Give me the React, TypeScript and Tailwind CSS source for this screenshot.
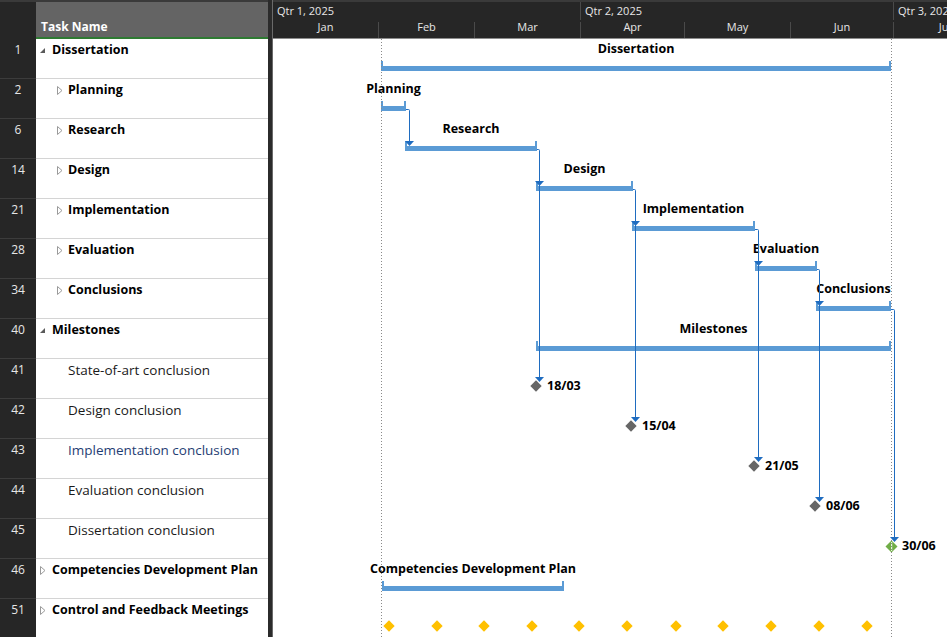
import React from 'react';

type Row = {
  id: number;
  name: string;
  level: 0 | 1;
  icon?: 'open' | 'closed';
  bold?: boolean;
  color?: string;
  bar?: { from: number; to: number; label: string };
  milestone?: { x: number; label: string; done?: boolean };
  meetings?: boolean;
};

// chart x positions are page pixels, chart starts at CHART_X
const CHART_X = 273;
const HEAD_H = 39;

const ROWS: Row[] = [
  { id: 1, name: 'Dissertation', level: 0, icon: 'open', bold: true, bar: { from: 381, to: 891, label: 'Dissertation' } },
  { id: 2, name: 'Planning', level: 1, icon: 'closed', bold: true, bar: { from: 381, to: 406, label: 'Planning' } },
  { id: 6, name: 'Research', level: 1, icon: 'closed', bold: true, bar: { from: 405, to: 537, label: 'Research' } },
  { id: 14, name: 'Design', level: 1, icon: 'closed', bold: true, bar: { from: 536, to: 633, label: 'Design' } },
  { id: 21, name: 'Implementation', level: 1, icon: 'closed', bold: true, bar: { from: 632, to: 755, label: 'Implementation' } },
  { id: 28, name: 'Evaluation', level: 1, icon: 'closed', bold: true, bar: { from: 755, to: 817, label: 'Evaluation' } },
  { id: 34, name: 'Conclusions', level: 1, icon: 'closed', bold: true, bar: { from: 816, to: 891, label: 'Conclusions' } },
  { id: 40, name: 'Milestones', level: 0, icon: 'open', bold: true, bar: { from: 536, to: 891, label: 'Milestones' } },
  { id: 41, name: 'State-of-art conclusion', level: 1, milestone: { x: 536, label: '18/03' } },
  { id: 42, name: 'Design conclusion', level: 1, milestone: { x: 631, label: '15/04' } },
  { id: 43, name: 'Implementation conclusion', level: 1, color: 'text-[#1f3d73]', milestone: { x: 754, label: '21/05' } },
  { id: 44, name: 'Evaluation conclusion', level: 1, milestone: { x: 815, label: '08/06' } },
  { id: 45, name: 'Dissertation conclusion', level: 1, milestone: { x: 891, label: '30/06', done: true } },
  { id: 46, name: 'Competencies Development Plan', level: 0, icon: 'closed', bold: true, bar: { from: 382, to: 564, label: 'Competencies Development Plan' } },
  { id: 51, name: 'Control and Feedback Meetings', level: 0, icon: 'closed', bold: true, meetings: true },
];

const MEETINGS = [389, 437, 484, 532, 579, 627, 676, 723, 771, 819, 867];

const QUARTERS = [
  { label: 'Qtr 1, 2025', w: 'w-[307px]' },
  { label: 'Qtr 2, 2025', w: 'w-[313px]' },
  { label: 'Qtr 3, 2025', w: 'w-[200px]' },
];

const MONTHS = [
  { label: 'Jan', w: 'w-[105px]' },
  { label: 'Feb', w: 'w-[96px]' },
  { label: 'Mar', w: 'w-[106px]' },
  { label: 'Apr', w: 'w-[104px]' },
  { label: 'May', w: 'w-[106px]' },
  { label: 'Jun', w: 'w-[103px]' },
  { label: 'Jul', w: 'w-[103px]' },
];

// links: bar end -> vertical drop with arrows
const LINKS = [
  { fromX: 406, fromY: 109, x: 409.5, tips: [146] },
  { fromX: 537, fromY: 149, x: 539.5, tips: [186, 382] },
  { fromX: 633, fromY: 189, x: 635.5, tips: [226, 422] },
  { fromX: 755, fromY: 229, x: 758.5, tips: [266, 462] },
  { fromX: 817, fromY: 269, x: 819.5, tips: [306, 502] },
  { fromX: 891, fromY: 309, x: 894.5, tips: [542] },
];

const TreeIcon: React.FC<{ kind: 'open' | 'closed' }> = ({ kind }) =>
  kind === 'open' ? (
    <svg width="7" height="7" viewBox="0 0 7 7" className="mt-[6px]">
      <polygon points="6,1 6,6 1,6" fill="#5a5a5a" />
    </svg>
  ) : (
    <svg width="7" height="9" viewBox="0 0 7 9" className="mt-[5px]">
      <polygon points="1.5,0.5 6,4.5 1.5,8.5" fill="none" stroke="#9a9a9a" strokeWidth="1" />
    </svg>
  );

const SummaryBar: React.FC<{ from: number; to: number; label: string }> = ({ from, to, label }) => (
  <>
    <div
      className="absolute top-[1px] h-[17px] flex justify-center"
      style={{ left: from - CHART_X, width: to - from }}
    >
      <span className="whitespace-nowrap text-[12.5px] leading-[17px] font-bold text-black">{label}</span>
    </div>
    <div className="absolute top-[22px] h-[10px]" style={{ left: from - CHART_X, width: to - from }}>
      <div className="absolute left-0 top-0 w-[2px] h-[6px] bg-[#5b9bd5]" />
      <div className="absolute right-0 top-0 w-[2px] h-[6px] bg-[#5b9bd5]" />
      <div className="absolute left-0 right-0 bottom-0 h-[5px] bg-[#5b9bd5]" />
    </div>
  </>
);

const Milestone: React.FC<{ x: number; label: string; done?: boolean }> = ({ x, label, done }) => (
  <>
    {done ? (
      <svg width="13" height="13" viewBox="0 0 13 13" className="absolute top-[21px]" style={{ left: x - CHART_X - 6 }}>
        <polygon points="6.5,0.5 12.5,6.5 6.5,12.5 0.5,6.5" fill="#70ad47" />
        <rect x="6" y="2" width="1.2" height="9" fill="#e8f3df" />
      </svg>
    ) : (
      <div
        className="absolute top-[23px] w-[8px] h-[8px] rotate-45 bg-[#666666]"
        style={{ left: x - CHART_X - 4 }}
      />
    )}
    <span
      className="absolute top-[18px] text-[12.5px] leading-[18px] font-bold text-black whitespace-nowrap"
      style={{ left: x - CHART_X + 11 }}
    >
      {label}
    </span>
  </>
);

export default function App() {
  return (
    <div className="w-[947px] h-[637px] overflow-hidden flex bg-[#262626] font-['Open_Sans','Segoe_UI',sans-serif]">
      {/* task table */}
      <div className="w-[268px] shrink-0 flex flex-col">
        <div className="h-[39px] shrink-0 flex border-t-2 border-[#3a3a3a]">
          <div className="w-[36px] bg-[#262626]" />
          <div className="flex-1 bg-[#646464] border-b-2 border-[#2e7a32] flex items-end pl-[5px] pb-[1px]">
            <span className="text-[12px] leading-[18px] font-bold text-white">Task Name</span>
          </div>
        </div>
        {ROWS.map(r => (
          <div key={r.id} className="h-[40px] shrink-0 flex">
            <div className="w-[36px] bg-[#262626] border-b border-[#3c3c3c] text-center text-[12px] leading-[18px] pt-[2px] text-[#e6e6e6]">
              {r.id}
            </div>
            <div className="flex-1 bg-white border-b border-[#d4d4d4] flex items-start pt-[2px]">
              <div className={r.level === 0 ? 'w-[16px] pl-[3px] flex' : 'w-[32px] pl-[20px] flex'}>
                {r.icon && <TreeIcon kind={r.icon} />}
              </div>
              <span
                className={`leading-[18px] whitespace-nowrap ${r.bold ? 'text-[12.5px] font-bold text-black' : 'text-[13.5px] text-[#1a1a1a]'} ${r.color ?? ''}`}
              >
                {r.name}
              </span>
            </div>
          </div>
        ))}
      </div>

      {/* splitter */}
      <div className="w-[5px] shrink-0 bg-[#2b2b2b] border-r border-[#6a6a6a]" />

      {/* gantt chart */}
      <div className="flex-1 flex flex-col overflow-hidden">
        <div className="h-[39px] shrink-0 bg-[#262626] border-t-2 border-[#3a3a3a] border-b border-b-[#8c8c8c] flex flex-col text-[11px] text-[#e6e6e6]">
          <div className="h-[18px] flex">
            {QUARTERS.map((q, i) => (
              <div key={q.label} className={`${q.w} shrink-0 pl-[4px] leading-[18px] whitespace-nowrap ${i > 0 ? 'border-l border-[#4a4a4a]' : ''}`}>
                {q.label}
              </div>
            ))}
          </div>
          <div className="h-[18px] flex">
            {MONTHS.map((m, i) => (
              <div
                key={m.label}
                className={`${m.w} shrink-0 h-[16px] mt-[2px] text-center leading-[10px] ${i > 0 ? 'border-l border-[#4a4a4a]' : ''}`}
              >
                {m.label}
              </div>
            ))}
          </div>
        </div>

        <div className="relative flex-1 bg-white flex flex-col">
          {ROWS.map(r => (
            <div key={r.id} className="relative h-[40px] shrink-0">
              {r.bar && <SummaryBar {...r.bar} />}
              {r.milestone && <Milestone {...r.milestone} />}
              {r.meetings &&
                MEETINGS.map(x => (
                  <div
                    key={x}
                    className="absolute top-[23px] w-[8px] h-[8px] rotate-45 bg-[#ffc000]"
                    style={{ left: x - CHART_X - 4 }}
                  />
                ))}
            </div>
          ))}

          <svg className="absolute inset-0 pointer-events-none" width="674" height="598">
            <g transform={`translate(${-CHART_X},${-HEAD_H})`}>
              <line x1="381.5" y1="39" x2="381.5" y2="637" stroke="#8a8a8a" strokeDasharray="1 2" />
              <line x1="891.5" y1="39" x2="891.5" y2="637" stroke="#8a8a8a" strokeDasharray="1 2" />
              {LINKS.map(l => {
                const last = l.tips[l.tips.length - 1];
                return (
                  <g key={l.fromX}>
                    <path
                      d={`M${l.fromX} ${l.fromY + 0.5} H${l.x - 1} Q${l.x} ${l.fromY + 0.5} ${l.x} ${l.fromY + 1.5} V${last - 4}`}
                      stroke="#1f6cc0"
                      strokeWidth="1"
                      fill="none"
                    />
                    {l.tips.map(t => (
                      <polygon key={t} points={`${l.x - 4.5},${t - 5} ${l.x + 4.5},${t - 5} ${l.x},${t}`} fill="#1f6cc0" />
                    ))}
                  </g>
                );
              })}
            </g>
          </svg>
        </div>
      </div>
    </div>
  );
}
